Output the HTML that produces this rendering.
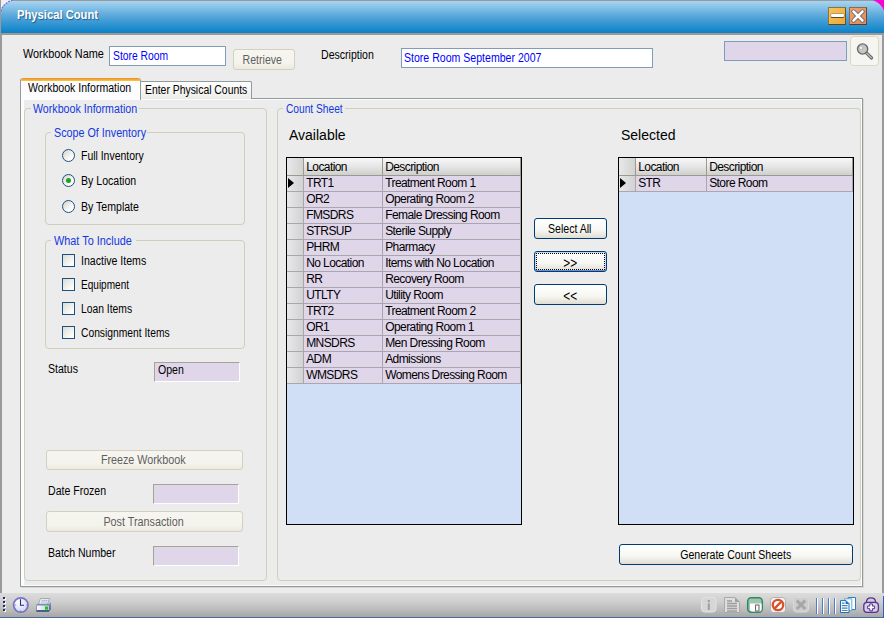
<!DOCTYPE html>
<html>
<head>
<meta charset="utf-8">
<title>Physical Count</title>
<style>
html,body{margin:0;padding:0;}
body{width:884px;height:618px;overflow:hidden;background:#ececec;position:relative;
 font-family:"Liberation Sans",sans-serif;font-size:12px;color:#000;}
.abs{position:absolute;}
#win{position:absolute;left:0;top:0;width:884px;height:618px;background:#ececec;overflow:hidden;}
#title{position:absolute;left:0;top:0;width:884px;height:33px;border-top:1px solid #9a9a9a;box-sizing:border-box;
 background:linear-gradient(#a6d5f2 0px,#8ac3e8 6px,#69b0de 12px,#4aa0d7 18px,#2d93d0 24px,#1286cb 30px,#0a81c8 32px);}
#title .t{position:absolute;left:17px;top:7px;font-weight:bold;font-size:12px;line-height:14px;color:#fff;transform:scaleX(.935);transform-origin:0 0;
 text-shadow:1px 1px 1px rgba(0,40,90,.55);white-space:nowrap;}
.lbl{position:absolute;white-space:nowrap;line-height:14px;font-size:12.5px;transform:scaleX(.845);transform-origin:0 0;}
.ms{position:relative;display:inline-block;font-size:12.5px;transform:scaleX(.845);transform-origin:50% 50%;white-space:nowrap;}
.msl{position:relative;display:inline-block;font-size:12.5px;transform:scaleX(.845);transform-origin:0 50%;white-space:nowrap;}
.blue{color:#1f3fd6;}
.tb{position:absolute;box-sizing:border-box;border:1px solid #7f9db9;background:#fff;color:#0000ff;
 font-size:12px;line-height:18px;padding-left:3px;white-space:nowrap;overflow:hidden;}
.lav{position:absolute;box-sizing:border-box;background:#e0d6ea;border:1px solid;border-color:#a6a294 #fff #fff #a6a294;
 font-size:12px;line-height:15px;padding-left:3px;}
.btn{position:absolute;box-sizing:border-box;border:1px solid #003c74;border-radius:3px;
 background:linear-gradient(#ffffff 0%,#f6f6f2 60%,#dfddd3 100%);text-align:center;font-size:12px;white-space:nowrap;}
.btn.dis{border-color:#d3d0bc;background:linear-gradient(#f6f5f0,#f4f3ec 70%,#eceadf);color:#5e5e5e;}
.gb{position:absolute;box-sizing:border-box;border:1px solid #cfceba;border-radius:4px;}
.gb>span{position:absolute;top:-7px;left:5px;height:14px;background:#ececec;color:#1238e0;white-space:nowrap;}
.gb>span>b{position:absolute;left:2px;top:0;font-weight:normal;font-size:12.5px;line-height:14px;transform:scaleX(.845);transform-origin:0 0;}
.radio{position:absolute;width:11px;height:11px;border:1px solid #1c5180;border-radius:50%;
 background:linear-gradient(135deg,#d9d9d2 10%,#ffffff 75%);}
.radio.on::after{content:"";position:absolute;left:3px;top:3px;width:5px;height:5px;border-radius:50%;background:#21a121;}
.chk{position:absolute;box-sizing:border-box;width:13px;height:13px;border:1px solid #1c5180;
 background:linear-gradient(135deg,#dcdcd4 0%,#ffffff 90%);}
.grid{position:absolute;box-sizing:border-box;border:1px solid #000;background:#d0dff5;overflow:hidden;}
.grid .hd,.grid .rw{position:absolute;left:0;height:16px;}
.cell{position:absolute;top:0;box-sizing:border-box;height:16px;border-right:1px solid #aaa6ae;border-bottom:1px solid #aaa6ae;
 font-size:12px;letter-spacing:-0.58px;line-height:15px;padding-left:2.2px;white-space:nowrap;overflow:hidden;background:#e0d6ea;}
.hd .cell{height:18px;line-height:18px;background:linear-gradient(#f7f7f7,#e6e6e6 50%,#cfcfcf);border-color:#9c9a8e;}
.cell.rh{background:linear-gradient(90deg,#e8e8e8,#d2d2d2);padding:0;}
.arrow{position:absolute;left:1px;top:1.6px;width:0;height:0;border-left:6.6px solid #000;border-top:5.7px solid transparent;border-bottom:5.7px solid transparent;}
</style>
</head>
<body>
<div id="win">

 <div id="title"><div class="t">Physical Count</div></div>

 <svg class="abs" style="left:0;top:0" width="884" height="16" viewBox="0 0 884 16">
  <path d="M12.6 0 A17 17 0 0 0 0 13 L0 0 Z" fill="#efefef"/>
  <path d="M12.6 0.2 A17 17 0 0 0 0.2 13" fill="none" stroke="#6868f2" stroke-width="1.3" stroke-dasharray="1.6 1.4"/>
  <path d="M872.6 0 A19 19 0 0 1 884 10.6 L884 0 Z" fill="#ff00d2"/>
  <path d="M872.6 0.3 A19 19 0 0 1 883.8 10.6" fill="none" stroke="#8a96e8" stroke-width="0.9" stroke-dasharray="1.4 1.4" opacity=".8"/>
 </svg>

 <!-- window frame -->
 <div class="abs" style="left:0;top:33px;width:2px;height:585px;background:#9a9a9a;"></div>
 <div class="abs" style="left:882px;top:33px;width:2px;height:585px;background:#9a9a9a;"></div>
 <div class="abs" style="left:0;top:33px;width:884px;height:2px;background:#9d9893;"></div>
 <div class="abs" style="left:0;top:0;width:1px;height:34px;background:#9a9a9a;"></div>
 <!-- title buttons -->
 <div class="abs" id="bmin" style="left:828px;top:7px;width:18px;height:18px;box-sizing:border-box;border:1px solid;border-color:#8e7440 #6a5226 #5c4620 #8e7440;background:linear-gradient(135deg,#f7c45c,#e9a93a);">
   <div class="abs" style="left:2px;top:6px;width:13px;height:3px;background:#fff;box-shadow:0 1px 0 #5a4a2a, 0 0 0 0.5px #8a7a5a;border-radius:1px;"></div></div>
 <div class="abs" id="bcls" style="left:849px;top:7px;width:18px;height:18px;box-sizing:border-box;border:1px solid;border-color:#8e6a50 #6a4632 #5c3a2a #8e6a50;background:linear-gradient(135deg,#f0a070,#e08a5c);">
   <svg class="abs" style="left:1px;top:1px" width="14" height="14" viewBox="0 0 14 14"><path d="M2.5 2.5 L11.5 11.5 M11.5 2.5 L2.5 11.5" stroke="#555" stroke-width="4" stroke-linecap="round"/><path d="M2.5 2.5 L11.5 11.5 M11.5 2.5 L2.5 11.5" stroke="#fff" stroke-width="2.6" stroke-linecap="round"/></svg></div>
 <!-- top row -->
 <div class="lbl" style="left:23px;top:46.5px;transform:scaleX(.87);">Workbook Name</div>
 <div class="tb" style="left:109px;top:46px;width:117px;height:20px;"><span class="msl" style="left:-0.5px;transform:scaleX(.825)">Store Room</span></div>
 <div class="btn dis" style="left:233px;top:49px;width:62px;height:21px;line-height:21px;"><span class="ms" style="left:-1.5px">Retrieve</span></div>
 <div class="lbl" style="left:321px;top:48px;">Description</div>
 <div class="tb" style="left:401px;top:48px;width:252px;height:20px;"><span class="msl" style="left:-1px">Store Room September 2007</span></div>
 <div class="abs" style="left:724px;top:41px;width:123px;height:20px;box-sizing:border-box;border:1px solid #7f9db9;background:#e0d6ea;"></div>
 <div class="abs" id="bsearch" style="left:850.4px;top:36.3px;width:29px;height:29.4px;box-sizing:border-box;border:1px solid #dcd8bc;border-radius:3.5px;background:#f5f5f2;">
   <svg class="abs" style="left:4px;top:4px" width="20" height="20" viewBox="0 0 20 20"><path d="M11.2 11.7 L16.6 17" stroke="#6a6a6a" stroke-width="3.2" stroke-linecap="round"/><path d="M11.5 12 L16.5 16.9" stroke="#bdbdbd" stroke-width="1.2" stroke-linecap="round"/><circle cx="7.6" cy="8" r="5.1" fill="#c6c6c6" stroke="#6b6b6b" stroke-width="1.4"/><circle cx="6" cy="6.8" r="1.7" fill="#f2f2f2" stroke="#9a9a9a" stroke-width="0.5"/></svg></div>
 <!-- tab control -->
 <div class="abs" id="tabpage" style="left:20px;top:98px;width:843px;height:489px;box-sizing:border-box;border:1px solid #919b9c;background:#fcfcfe;box-shadow:1px 1px 0 #d9d9d4;"></div>
 <div class="abs" id="tabinner" style="left:24px;top:100px;width:837px;height:485px;background:#ececec;"></div>
 <div class="abs" id="tab2" style="left:140px;top:80.5px;width:112px;height:18.5px;box-sizing:border-box;border:1px solid #919b9c;border-bottom:none;border-radius:2px 2px 0 0;background:linear-gradient(#ffffff,#f4f4f2 60%,#ebebe6);"><div class="lbl" style="left:4px;top:1.5px;transform:scaleX(.832);">Enter Physical Counts</div></div>
 <div class="abs" id="tab1" style="left:20px;top:78px;width:121px;height:22px;box-sizing:border-box;border:1px solid #919b9c;border-bottom:none;border-top:none;border-radius:3px 3px 0 0;background:#fcfcfe;overflow:hidden;"><div class="abs" style="left:-1px;top:0;width:121px;height:3px;background:linear-gradient(#e68b2c,#ffc73c);border-radius:3px 3px 0 0;"></div><div class="lbl" style="left:7px;top:3.3px;">Workbook Information</div></div>
 <!-- group boxes -->
 <div class="gb" style="left:24px;top:108px;width:243px;height:473px;"><span style="width:108px;left:6px"><b style="transform:scaleX(.853)">Workbook Information</b></span></div>
 <div class="gb" style="left:277px;top:108px;width:584px;height:473px;"><span style="width:62px"><b style="left:2.6px;transform:scaleX(.815)">Count Sheet</b></span></div>
 <div class="gb" style="left:45px;top:132px;width:200px;height:93px;"><span style="width:96px"><b style="left:2.8px;transform:scaleX(.86)">Scope Of Inventory</b></span></div>
 <div class="gb" style="left:45px;top:240px;width:200px;height:109px;"><span style="width:85px"><b style="transform:scaleX(.87);left:3px;">What To Include</b></span></div>
 <!-- radios -->
 <div class="radio" style="left:62px;top:149px;"></div><div class="lbl" style="left:81px;top:149px;transform:scaleX(.835);">Full Inventory</div>
 <div class="radio on" style="left:62px;top:174px;"></div><div class="lbl" style="left:81px;top:174px;">By Location</div>
 <div class="radio" style="left:62px;top:200px;"></div><div class="lbl" style="left:81px;top:200px;">By Template</div>
 <!-- checks -->
 <div class="chk" style="left:62px;top:254px;"></div><div class="lbl" style="left:81px;top:254px;">Inactive Items</div>
 <div class="chk" style="left:62px;top:278px;"></div><div class="lbl" style="left:81px;top:278px;transform:scaleX(.804);">Equipment</div>
 <div class="chk" style="left:62px;top:302px;"></div><div class="lbl" style="left:81px;top:302px;transform:scaleX(.826);">Loan Items</div>
 <div class="chk" style="left:62px;top:326px;"></div><div class="lbl" style="left:81px;top:326px;transform:scaleX(.823);">Consignment Items</div>
 <!-- status -->
 <div class="lbl" style="left:48px;top:362px;">Status</div>
 <div class="lav" style="left:154px;top:362px;width:86px;height:19.6px;"><span class="msl">Open</span></div>
 <div class="btn dis" style="left:46px;top:449.5px;width:197px;height:20.3px;line-height:19px;"><span class="ms" style="left:-1.2px;transform:scaleX(.86)">Freeze Workbook</span></div>
 <div class="lbl" style="left:48px;top:484px;">Date Frozen</div>
 <div class="lav" style="left:153px;top:484px;width:86px;height:19.6px;"></div>
 <div class="btn dis" style="left:46px;top:511px;width:197px;height:21px;line-height:20px;"><span class="ms" style="left:-0.8px;transform:scaleX(.862)">Post Transaction</span></div>
 <div class="lbl" style="left:48px;top:546px;">Batch Number</div>
 <div class="lav" style="left:153px;top:546px;width:86px;height:19.6px;"></div>
 <!-- count sheet -->
 <div class="lbl" style="left:289px;top:126.5px;font-size:14px;line-height:16px;transform:none;">Available</div>
 <div class="lbl" style="left:621px;top:126.5px;font-size:14px;line-height:16px;transform:none;">Selected</div>
<div class="grid" id="g1" style="left:286px;top:157px;width:236px;height:368px;">
 <div class="hd" style="top:0;width:234px;height:18px;"><div class="cell rh" style="left:0;width:17px;"></div><div class="cell" style="left:17px;width:79px;">Location</div><div class="cell" style="left:96px;width:138px;">Description</div></div>
 <div class="rw" style="top:18px;width:234px;"><div class="cell rh" style="left:0;width:17px;"><i class="arrow"></i></div><div class="cell" style="left:17px;width:79px;">TRT1</div><div class="cell" style="left:96px;width:138px;">Treatment Room 1</div></div>
 <div class="rw" style="top:34px;width:234px;"><div class="cell rh" style="left:0;width:17px;"></div><div class="cell" style="left:17px;width:79px;">OR2</div><div class="cell" style="left:96px;width:138px;">Operating Room 2</div></div>
 <div class="rw" style="top:50px;width:234px;"><div class="cell rh" style="left:0;width:17px;"></div><div class="cell" style="left:17px;width:79px;">FMSDRS</div><div class="cell" style="left:96px;width:138px;">Female Dressing Room</div></div>
 <div class="rw" style="top:66px;width:234px;"><div class="cell rh" style="left:0;width:17px;"></div><div class="cell" style="left:17px;width:79px;">STRSUP</div><div class="cell" style="left:96px;width:138px;">Sterile Supply</div></div>
 <div class="rw" style="top:82px;width:234px;"><div class="cell rh" style="left:0;width:17px;"></div><div class="cell" style="left:17px;width:79px;">PHRM</div><div class="cell" style="left:96px;width:138px;">Pharmacy</div></div>
 <div class="rw" style="top:98px;width:234px;"><div class="cell rh" style="left:0;width:17px;"></div><div class="cell" style="left:17px;width:79px;">No Location</div><div class="cell" style="left:96px;width:138px;">Items with No Location</div></div>
 <div class="rw" style="top:114px;width:234px;"><div class="cell rh" style="left:0;width:17px;"></div><div class="cell" style="left:17px;width:79px;">RR</div><div class="cell" style="left:96px;width:138px;">Recovery Room</div></div>
 <div class="rw" style="top:130px;width:234px;"><div class="cell rh" style="left:0;width:17px;"></div><div class="cell" style="left:17px;width:79px;">UTLTY</div><div class="cell" style="left:96px;width:138px;">Utility Room</div></div>
 <div class="rw" style="top:146px;width:234px;"><div class="cell rh" style="left:0;width:17px;"></div><div class="cell" style="left:17px;width:79px;">TRT2</div><div class="cell" style="left:96px;width:138px;">Treatment Room 2</div></div>
 <div class="rw" style="top:162px;width:234px;"><div class="cell rh" style="left:0;width:17px;"></div><div class="cell" style="left:17px;width:79px;">OR1</div><div class="cell" style="left:96px;width:138px;">Operating Room 1</div></div>
 <div class="rw" style="top:178px;width:234px;"><div class="cell rh" style="left:0;width:17px;"></div><div class="cell" style="left:17px;width:79px;">MNSDRS</div><div class="cell" style="left:96px;width:138px;">Men Dressing Room</div></div>
 <div class="rw" style="top:194px;width:234px;"><div class="cell rh" style="left:0;width:17px;"></div><div class="cell" style="left:17px;width:79px;">ADM</div><div class="cell" style="left:96px;width:138px;">Admissions</div></div>
 <div class="rw" style="top:210px;width:234px;"><div class="cell rh" style="left:0;width:17px;"></div><div class="cell" style="left:17px;width:79px;">WMSDRS</div><div class="cell" style="left:96px;width:138px;">Womens Dressing Room</div></div>
</div>
<div class="grid" id="g2" style="left:618px;top:157px;width:236px;height:368px;">
 <div class="hd" style="top:0;width:234px;height:18px;"><div class="cell rh" style="left:0;width:17px;"></div><div class="cell" style="left:17px;width:71px;">Location</div><div class="cell" style="left:88px;width:146px;">Description</div></div>
 <div class="rw" style="top:18px;width:234px;"><div class="cell rh" style="left:0;width:17px;"><i class="arrow"></i></div><div class="cell" style="left:17px;width:71px;">STR</div><div class="cell" style="left:88px;width:146px;">Store Room</div></div>
</div>

 <div class="btn" style="left:534px;top:218px;width:73px;height:21px;line-height:20px;"><span class="ms" style="left:-0.7px">Select All</span></div>
 <div class="btn" id="bfwd" style="left:534px;top:251px;width:73px;height:21px;line-height:20px;box-shadow:inset 0 -1px 0 0 #6a8fd8, inset 0 0 0 1px #c4d8f4;"><div class="abs" style="left:1px;top:1px;right:1px;bottom:1px;border:1px dotted #000;"></div><span class="ms" style="font-size:14px;top:0.5px">&gt;&gt;</span></div>
 <div class="btn" style="left:534px;top:284px;width:73px;height:21px;line-height:20px;"><span class="ms" style="font-size:14px;top:0.5px">&lt;&lt;</span></div>
 <div class="btn" style="left:619px;top:544px;width:234px;height:21px;line-height:20.5px;"><span class="ms">Generate Count Sheets</span></div>
 <!-- toolbar -->
 <div class="abs" id="tool" style="left:0;top:593px;width:884px;height:25px;background:linear-gradient(#dcdcdc 0,#d0d0d0 8px,#b8b8b8 18px,#a6a6a6 24px);"></div>
 <div class="abs" style="left:0;top:617px;width:884px;height:1px;background:#4b6c9e;"></div>
 <div class="abs" style="left:883px;top:596px;width:1px;height:22px;background:#2a63c8;"></div>

 <!-- toolbar grip -->
 <svg class="abs" style="left:0;top:593px" width="884" height="25" viewBox="0 0 884 25">
  <g fill="#ffffff"><rect x="4" y="5" width="2" height="2"/><rect x="4" y="9" width="2" height="2"/><rect x="4" y="13" width="2" height="2"/><rect x="4" y="17" width="2" height="2"/></g>
  <g fill="#1b2c72"><rect x="3" y="4" width="2" height="2"/><rect x="3" y="8" width="2" height="2"/><rect x="3" y="12" width="2" height="2"/><rect x="3" y="16" width="2" height="2"/></g>
  <!-- clock -->
  <defs>
   <radialGradient id="ck" cx="35%" cy="30%" r="75%"><stop offset="0" stop-color="#ffffff"/><stop offset="1" stop-color="#cdd6f3"/></radialGradient>
   <linearGradient id="pb" x1="0" y1="0" x2="0" y2="1"><stop offset="0" stop-color="#8aa2bd"/><stop offset="1" stop-color="#3f5f86"/></linearGradient>
   <linearGradient id="pf" x1="0" y1="0" x2="1" y2="0"><stop offset="0" stop-color="#ffffff"/><stop offset="1" stop-color="#b9c9e0"/></linearGradient>
  </defs>
  <circle cx="20.8" cy="12" r="7.2" fill="url(#ck)" stroke="#7875c6" stroke-width="1.7"/>
  <path d="M20.5 6.3 V12.2 H24" fill="none" stroke="#2b2878" stroke-width="1.1"/>
  <g fill="#8c8ad0"><rect x="20" y="17.2" width="1" height="1.3"/><rect x="14.8" y="11.6" width="1.3" height="1"/><rect x="26" y="11.6" width="1.3" height="1"/></g>
  <!-- printer -->
  <path d="M40.5 5.5 L49.5 5.5 L47.5 11 L38.5 11 Z" fill="#f4f6fa" stroke="#8f9bb0" stroke-width="0.8"/>
  <path d="M41.5 7.3 H47.8 M40.8 9 H47.2" stroke="#9aa6b8" stroke-width="0.8"/>
  <path d="M36.5 11 H49 L51 9 V16 L49 18.5 H36.5 Z" fill="url(#pb)"/>
  <rect x="37" y="12.5" width="12" height="4.6" fill="url(#pf)"/>
  <path d="M36.5 17.3 H49 V18.8 H36.5 Z" fill="#3b5a82"/>
  <rect x="45" y="13.6" width="3" height="3" fill="#18c418"/>
  <!-- info (disabled) -->
  <rect x="701.5" y="4.5" width="14.5" height="14.5" rx="3.2" fill="#d6d6d6" stroke="#e3e3e3"/>
  <rect x="707.8" y="7" width="2" height="2.2" fill="#9d9d9d"/><rect x="707.8" y="10.4" width="2" height="6.6" fill="#9d9d9d"/>
  <!-- doc (disabled) -->
  <path d="M724.5 4.5 H735 L739.5 9 V19.5 H724.5 Z" fill="#dedede" stroke="#a9a9a9"/>
  <path d="M735 4.5 V9 H739.5 Z" fill="#a0a0a0"/>
  <path d="M727 8 H732 M727 10.5 H737 M727 13 H737 M727 15.5 H737 M727 18 H737" stroke="#9c9c9c" stroke-width="1.3"/>
  <!-- green window -->
  <rect x="747.7" y="4.7" width="14.6" height="14.6" rx="3.5" fill="#9fc5b0" stroke="#2f8a5f" stroke-width="1.5"/>
  <path d="M750 10.6 H761.6 V16.5 Q761.6 18.6 759.5 18.6 H752 Q750 18.6 750 16.5 Z" fill="#ffffff"/>
  <rect x="755.6" y="12" width="3.4" height="6" fill="#fff" stroke="#505050" stroke-width="0.9"/>
  <!-- no entry -->
  <rect x="770.5" y="4.5" width="15" height="15" rx="3" fill="#f1f1f1" stroke="#b0b0b0"/>
  <circle cx="778" cy="12" r="5.2" fill="#fff" stroke="#d8532b" stroke-width="2.3"/>
  <path d="M774.4 15.6 L781.6 8.4" stroke="#d8532b" stroke-width="2.3"/>
  <!-- X disabled -->
  <rect x="793.5" y="4.5" width="15" height="14.5" rx="3" fill="#cdcdcd" stroke="#d9d9d9"/>
  <path d="M796.8 7.6 L805.2 16 M805.2 7.6 L796.8 16" stroke="#a7a7a7" stroke-width="3"/>
  <!-- separators -->
  <g><rect x="816" y="5" width="1" height="16" fill="#4b7bd6"/><rect x="817" y="5" width="1" height="16" fill="#fff"/>
  <rect x="822" y="5" width="1" height="16" fill="#4b7bd6"/><rect x="823" y="5" width="1" height="16" fill="#fff"/>
  <rect x="828" y="5" width="1" height="16" fill="#4b7bd6"/><rect x="829" y="5" width="1" height="16" fill="#fff"/>
  <rect x="834" y="5" width="1" height="16" fill="#4b7bd6"/><rect x="835" y="5" width="1" height="16" fill="#fff"/></g>
  <!-- copy -->
  <path d="M848.2 4.5 H855.5 V16.6 H848.2 Z" fill="#fff" stroke="#2a7fc4"/>
  <path d="M844.6 5.8 H851.8 V17.6 H844.6 Z" fill="#f6f9fd" stroke="#5c9fd4" stroke-width="0.9"/>
  <path d="M840.5 7.6 H846 L849 10.6 V19.5 H840.5 Z" fill="#fff" stroke="#1d6fb4"/>
  <path d="M845.6 7.4 V11 H849.2 Z" fill="#1d6fb4"/>
  <path d="M841.8 10.1 H844.6 M841.8 12.6 H847.6 M841.8 15.1 H847.6 M841.8 17.5 H847.6" stroke="#3886c8" stroke-width="1.1"/>
  <!-- medkit -->
  <path d="M866.4 9.4 Q866.4 4.9 871 4.9 Q875.6 4.9 875.6 9.4" fill="none" stroke="#5a2e96" stroke-width="1.3"/>
  <rect x="863.8" y="9.4" width="14.6" height="10" rx="3.4" fill="#d5d0e2" stroke="#5a2e96" stroke-width="1.3"/>
  <path d="M869.8 10.9 H872.4 V13.1 H874.6 V15.7 H872.4 V17.9 H869.8 V15.7 H867.6 V13.1 H869.8 Z" fill="#fff" stroke="#5a2e96" stroke-width="1"/>
 </svg>
</div>
</body>
</html>
